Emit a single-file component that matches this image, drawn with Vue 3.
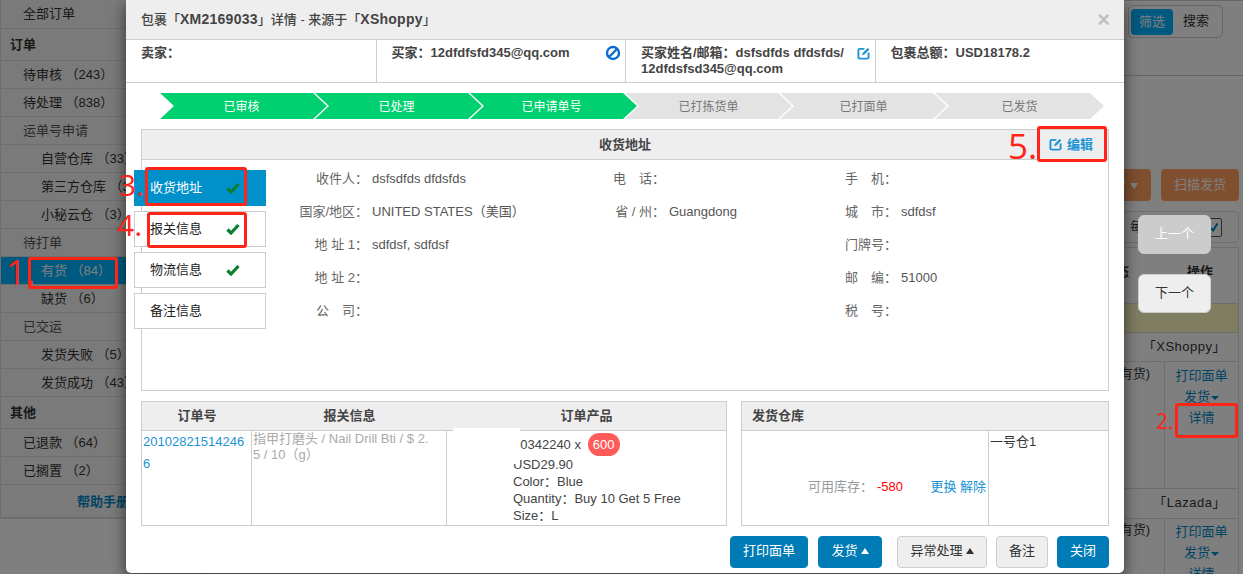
<script setup>
const sideRows = [
  { t: '全部订单', c: 'sub' },
  { t: '订单', c: 'group' },
  { t: '待审核 （243）', c: 'sub' },
  { t: '待处理 （838）', c: 'sub' },
  { t: '运单号申请', c: 'sub muted' },
  { t: '自营仓库 （33）', c: 'subsub' },
  { t: '第三方仓库 （3）', c: 'subsub' },
  { t: '小秘云仓 （3）', c: 'subsub' },
  { t: '待打单', c: 'sub muted' },
  { t: '有货 （84）', c: 'subsub active' },
  { t: '缺货 （6）', c: 'subsub' },
  { t: '已交运', c: 'sub muted' },
  { t: '发货失败 （5）', c: 'subsub' },
  { t: '发货成功 （43）', c: 'subsub' },
  { t: '其他', c: 'group' },
  { t: '已退款 （64）', c: 'sub' },
  { t: '已搁置 （2）', c: 'sub' }
]
const steps = [
  { t: '已审核', on: true }, { t: '已处理', on: true }, { t: '已申请单号', on: true },
  { t: '已打拣货单', on: false }, { t: '已打面单', on: false }, { t: '已发货', on: false }
]
const tabs = [
  { t: '收货地址', on: true, ok: true }, { t: '报关信息', ok: true },
  { t: '物流信息', ok: true }, { t: '备注信息', ok: false }
]
const fields = [
  ['收件人：', 'dsfsdfds dfdsfds'], ['电　话：', ''], ['手　机：', ''],
  ['国家/地区：', 'UNITED STATES（美国）'], ['省 / 州：', 'Guangdong'], ['城　市：', 'sdfdsf'],
  ['地 址 1：', 'sdfdsf, sdfdsf'], ['', ''], ['门牌号：', ''],
  ['地 址 2：', ''], ['', ''], ['邮　编：', '51000'],
  ['公　司：', ''], ['', ''], ['税　号：', '']
]
</script>

<template>
  <div class="page">
    <aside class="side">
      <div v-for="r in sideRows" :key="r.t" class="row" :class="r.c">{{ r.t }}</div>
      <div class="row help">帮助手册</div>
    </aside>
    <main class="main">
      <div class="filter-bar">
        <div class="seg"><span class="seg-on">筛选</span><span class="seg-off">搜索</span></div>
      </div>
      <div class="actions">
        <span class="orange first">批量发货<i class="caret light"></i></span>
        <span class="orange scan">扫描发货</span>
      </div>
      <div class="pager">
        <span>每</span>
        <span class="cb"><svg viewBox="0 0 14 14" width="12" height="12"><path d="M3 8l3 3 5-8" fill="none" stroke="#0089c9" stroke-width="2.4"/></svg></span>
      </div>
      <div class="table">
        <div class="t-head"><span class="t-st">状态</span><span>操作</span></div>
        <div class="t-yellow"></div>
        <div class="t-shop">「XShoppy」</div>
        <div class="t-row">
          <div class="t-left">有货)</div>
          <div class="t-ops"><a>打印面单</a><a>发货<i class="caret"></i></a><a>详情</a></div>
        </div>
        <div class="t-shop lazada">「Lazada」</div>
        <div class="t-row">
          <div class="t-left">有货)</div>
          <div class="t-ops"><a>打印面单</a><a>发货<i class="caret"></i></a><a>详情</a></div>
        </div>
      </div>
    </main>

    <div class="backdrop"></div>

    <section class="modal">
      <header class="m-head">
        <div class="m-title">包裹「<b>XM2169033</b>」详情 - 来源于「<b>XShoppy</b>」</div>
        <span class="m-close">×</span>
      </header>
      <div class="info">
        <div class="info-cell">卖家：</div>
        <div class="info-cell with-icon">
          <span>买家：12dfdfsfd345@qq.com</span>
          <svg class="ban" viewBox="0 0 16 16" width="16" height="16"><circle cx="8" cy="8" r="6" fill="none" stroke="#0a6ccf" stroke-width="2.4"/><path d="M4 12L12 4" stroke="#0a6ccf" stroke-width="2.4"/></svg>
        </div>
        <div class="info-cell with-icon">
          <span>买家姓名/邮箱：dsfsdfds dfdsfds/ 12dfdsfsd345@qq.com</span>
          <svg class="edit-in" viewBox="0 0 14 14" width="13" height="13"><path d="M8 2H3a1.500 1.500 0 0 0-1.500 1.500v7.500A1.500 1.500 0 0 0 3 12.500h8a1.500 1.500 0 0 0 1.500-1.500V6" fill="none" stroke="#1a94d4" stroke-width="2"/><path d="M5.500 8.800l.6-2.400L11.500 1l1.800 1.800L8 8.200z" fill="#1a94d4"/></svg>
        </div>
        <div class="info-cell">包裹总额：USD18178.2</div>
      </div>

      <div class="steps">
        <div v-for="s in steps" :key="s.t" class="step" :class="{ done: s.on }">{{ s.t }}</div>
      </div>

      <div class="panel">
        <div class="panel-head">
          <span>收货地址</span>
          <a class="edit">
            <svg viewBox="0 0 14 14" width="13" height="13"><path d="M8 2H3a1.500 1.500 0 0 0-1.500 1.500v7.500A1.500 1.500 0 0 0 3 12.500h8a1.500 1.500 0 0 0 1.500-1.500V6" fill="none" stroke="#1a94d4" stroke-width="2"/><path d="M5.500 8.800l.6-2.400L11.500 1l1.800 1.800L8 8.200z" fill="#1a94d4"/></svg>
            编辑
          </a>
        </div>
        <div class="panel-body">
          <div class="tabs">
            <div v-for="tab in tabs" :key="tab.t" class="tab" :class="{ on: tab.on }">
              <span>{{ tab.t }}</span>
              <svg v-if="tab.ok" viewBox="0 0 14 12" width="14" height="12"><path d="M1.500 6.500l3.500 3.500L12.500 2" fill="none" stroke="#0a7f2e" stroke-width="3.200"/></svg>
            </div>
          </div>
          <div class="fields">
            <template v-for="(f, i) in fields" :key="i">
              <div class="f-label">{{ f[0] }}</div>
              <div class="f-value">{{ f[1] }}</div>
            </template>
          </div>
        </div>
      </div>

      <div class="lower">
        <div class="box order">
          <div class="box-head">
            <div class="c1">订单号</div><div class="c2">报关信息</div><div class="c3">订单产品</div>
          </div>
          <div class="box-body">
            <div class="c1 order-no">20102821514246 6</div>
            <div class="c2 customs">指甲打磨头 / Nail Drill Bti / $ 2.5 / 10（g）</div>
            <div class="c3 product">
              <div class="pic-cover"></div>
              <div class="p-first">20342240 x <span class="badge">600</span></div>
              <div>USD29.90</div>
              <div>Color：Blue</div>
              <div>Quantity：Buy 10 Get 5 Free</div>
              <div>Size：L</div>
            </div>
          </div>
        </div>
        <div class="box ware">
          <div class="box-head ware-head">发货仓库</div>
          <div class="box-body">
            <div class="w1">
              <span class="stock">可用库存：</span><span class="minus">-580</span>
              <span class="links">更换 解除</span>
            </div>
            <div class="w2">一号仓1</div>
          </div>
        </div>
      </div>

      <footer class="m-foot">
        <button class="btn primary">打印面单</button>
        <button class="btn primary ship">发货<i class="up"></i></button>
        <button class="btn plain ex">异常处理<i class="up dark"></i></button>
        <button class="btn plain note">备注</button>
        <button class="btn primary close">关闭</button>
      </footer>
    </section>

    <button class="nav prev">上一个</button>
    <button class="nav next">下一个</button>

    <div class="mark n1">1.</div><div class="box-mark b1"></div>
    <div class="mark n2">2.</div><div class="box-mark b2"></div>
    <div class="mark n3">3.</div><div class="box-mark b3"></div>
    <div class="mark n4">4.</div><div class="box-mark b4"></div>
    <div class="mark n5">5.</div><div class="box-mark b5"></div>
  </div>
</template>

<style>
html, body { margin: 0; height: 100%; overflow: hidden; }
</style>

<style scoped>
.page {
  position: relative;
  display: flex;
  width: 1243px;
  height: 574px;
  overflow: hidden;
  background: #fff;
  color: #333;
  font: 13px/1.4 "Liberation Sans", "Noto Sans CJK SC", sans-serif;
}
.side { width: 200px; flex: none; align-self: flex-start; border: 1px solid #ddd; border-top: 0; box-sizing: border-box; background: #f5f5f5; }
.row { height: 28px; line-height: 28px; box-sizing: border-box; border-bottom: 1px solid #ddd; white-space: nowrap; }
.row.sub { padding-left: 22px; }
.row.subsub { padding-left: 40px; }
.row.muted { color: #555; }
.row.group { height: 32px; line-height: 32px; padding-left: 9px; font-weight: bold; }
.row.active { background: #00b2ff; color: #fff; }
.row.help { height: 33px; line-height: 33px; padding-left: 76px; color: #0089c9; font-weight: bold; }
.row:first-child { height: 29px; }

.main { flex: 1; display: flex; flex-direction: column; align-items: flex-end; padding-right: 4px; min-width: 0; }
.main > * { flex: none; }
.filter-bar { height: 76px; box-sizing: border-box; border-top: 1px solid #ccc; border-bottom: 1px solid #ccc; margin-right: -4px; width: calc(100% + 4px); padding: 4px 20px 0 0; display: flex; justify-content: flex-end; }
.seg { display: flex; align-items: center; padding: 3px; border: 1px solid #ccc; border-radius: 5px; width: 95px; box-sizing: border-box; height: 33px; }
.seg-on { background: #00b2ff; color: #fff; border-radius: 4px; width: 42px; height: 26px; line-height: 26px; text-align: center; margin-left: -1px; }
.seg-off { width: 46px; text-align: center; }
.actions { display: flex; gap: 10px; margin-top: 93px; height: 32px; width: 100%; justify-content: flex-end; }
.orange { background: #ff9f5f; color: #fff; border-radius: 4px; line-height: 32px; text-align: center; }
.orange.first { width: 120px; text-align: right; padding-right: 13px; box-sizing: border-box; }
.orange.scan { width: 78px; }
.pager { width: 100%; height: 32px; box-sizing: border-box; margin-top: 10px; border: 1px solid #ddd; border-radius: 4px; display: flex; align-items: center; justify-content: flex-end; gap: 62px; padding: 0 16px 0 4px; }
.cb { width: 15px; height: 17px; border: 1px solid #555; border-radius: 2px; display: flex; align-items: center; justify-content: center; }
.table { width: 100%; margin-top: 4px; border: 1px solid #ddd; border-bottom: 0; box-sizing: border-box; }
.t-head { height: 55px; display: flex; justify-content: flex-end; padding: 15px 25px 0 0; box-sizing: border-box; font-weight: bold; }
.t-st { margin-right: 58px; }
.t-yellow { height: 29px; background: #fffdc0; border-top: 1px solid #ddd; box-sizing: border-box; }
.t-shop { height: 29px; line-height: 28px; border-top: 1px solid #ddd; text-align: right; padding-right: 12px; box-sizing: border-box; letter-spacing: .5px; }
.t-shop.lazada { height: 30px; }
.t-row { height: 127px; display: flex; border-top: 1px solid #ddd; box-sizing: border-box; }
.t-left { flex: 1; padding: 3px 14px 0 0; text-align: right; }
.t-ops { width: 74px; flex: none; border-left: 1px solid #ddd; box-sizing: border-box; display: flex; flex-direction: column; align-items: center; padding-top: 3px; color: #0089c9; line-height: 21px; }
.lazada + .t-row .t-ops, .lazada + .t-row .t-left { padding-top: 2px; }
.caret { display: inline-block; border: 4px solid transparent; border-top-color: #0089c9; border-bottom: 0; margin-left: 1px; vertical-align: middle; }
.caret.light { border-width: 6px 4px 0; border-top-color: #fff; margin-left: 4px; }

.backdrop { position: absolute; inset: 0; background: rgba(0, 0, 0, .5); }

.modal {
  position: absolute; left: 126px; top: 0; width: 998px; height: 573px;
  background: #fff; border-radius: 0 0 5px 5px;
  box-shadow: 0 5px 15px rgba(0, 0, 0, .6);
  display: flex; flex-direction: column;
}
.m-head { height: 40px; flex: none; box-sizing: border-box; background: #eee; border-bottom: 1px solid #ccc; display: flex; justify-content: space-between; align-items: center; padding: 0 15px; }
.m-title { font-size: 13px; color: #444; font-weight: 500; }
.m-title b { font-size: 14px; letter-spacing: .25px; }
.m-close { font-size: 22px; font-weight: bold; color: #c0c0c0; line-height: 1; margin-right: -1px; }
.info { height: 43px; flex: none; box-sizing: border-box; display: grid; grid-template-columns: repeat(4, 1fr); border-bottom: 1px solid #ccc; font-weight: bold; font-size: 13px; color: #444; line-height: 16px; }
.info-cell { padding: 5px 15px 0; border-left: 1px solid #ccc; position: relative; box-sizing: border-box; }
.info-cell:first-child { border-left: 0; }
.with-icon { padding-right: 28px; }
.ban { position: absolute; right: 4px; top: 5px; }
.edit-in { position: absolute; right: 5px; top: 7px; }

.steps { display: flex; margin: 10px 0 0 34px; height: 26px; flex: none; }
.step {
  width: 167px; flex: none; margin-right: -12px; line-height: 28px; text-align: center;
  font-size: 12px; background: #e3e3e3; color: #777; box-sizing: border-box;
  clip-path: polygon(0 0, calc(100% - 14px) 0, 100% 50%, calc(100% - 14px) 100%, 0 100%, 14px 50%);
}
.step:last-child { width: 169px; }
.step.done { background: #00d06f; color: #fff; padding-right: 4px; }

.panel { margin: 10px 15px 0; height: 262px; flex: none; box-sizing: border-box; border: 1px solid #ccc; }
.panel-head { height: 30px; box-sizing: border-box; background: #eee; border-bottom: 1px solid #ccc; text-align: center; line-height: 29px; font-weight: bold; color: #444; position: relative; }
.edit { position: absolute; right: 15px; top: 0; color: #1a94d4; display: flex; align-items: center; gap: 5px; }
.panel-body { display: flex; }
.tabs { margin: 10px 0 0 -8px; display: flex; flex-direction: column; gap: 5px; width: 132px; flex: none; }
.tab { height: 36px; box-sizing: border-box; border: 1px solid #ccc; background: #fff; display: flex; align-items: center; justify-content: space-between; padding: 0 25px 0 15px; color: #222; }
.tab.on { background: #0090ca; border-color: #0090ca; color: #fff; }
.fields { display: grid; grid-template-columns: 102px 217px 80px 152px 80px 1fr; grid-auto-rows: 33px; margin-top: 3px; color: #555; align-items: center; flex: 1; }
.f-label { text-align: right; color: #666; white-space: nowrap; }
.f-value { padding-left: 4px; white-space: nowrap; }

.lower { display: flex; gap: 14px; margin: 10px 15px 0; height: 125px; flex: none; }
.box { border: 1px solid #ccc; box-sizing: border-box; display: flex; flex-direction: column; }
.order { width: 586px; }
.ware { flex: 1; }
.box-head { height: 29px; flex: none; box-sizing: border-box; background: #eee; border-bottom: 1px solid #ccc; display: flex; line-height: 27px; font-weight: bold; color: #444; text-align: center; }
.ware-head { padding-left: 10px; }
.box-body { flex: 1; display: flex; min-height: 0; }
.c1 { width: 110px; flex: none; box-sizing: border-box; }
.c2 { width: 195px; flex: none; box-sizing: border-box; }
.c3 { flex: 1; }
.order-no { padding: 0 0 0 1px; color: #1a94d4; line-height: 22px; word-break: break-all; border-right: 1px solid #ccc; }
.customs { padding: 0 14px 0 1px; color: #aaa; line-height: 16px; border-right: 1px solid #ccc; word-break: break-all; }
.product { position: relative; padding: 2px 0 0 66px; line-height: 17px; color: #444; white-space: nowrap; min-width: 0; }
.pic-cover { position: absolute; left: 6px; top: -3px; width: 67px; height: 36px; background: #fff; z-index: 1; }
.p-first { height: 23px; line-height: 23px; }
.badge { display: inline-block; width: 32px; height: 23px; line-height: 23px; border-radius: 12px; background: #ff5a5a; color: #fff; text-align: center; margin-left: 3px; vertical-align: top; }
.w1 { width: 247px; flex: none; box-sizing: border-box; border-right: 1px solid #ccc; position: relative; }
.stock { position: absolute; left: 66px; top: 47px; color: #999; }
.minus { position: absolute; left: 135px; top: 47px; color: #f00; }
.links { position: absolute; right: 2px; top: 47px; color: #1a94d4; }
.w2 { padding: 2px 0 0 1px; color: #333; }

.m-foot { display: flex; justify-content: flex-end; margin: 10px 15px 0 0; height: 32px; flex: none; }
.btn { height: 32px; box-sizing: border-box; border-radius: 4px; font: inherit; padding: 0 0 2px; border: 1px solid #007bb6; }
.primary { background: #007bb6; color: #fff; width: 78px; }
.plain { background: #eee; border-color: #ccc; color: #333; }
.ship { width: 64px; margin-left: 10px; }
.ex { width: 90px; margin-left: 15px; }
.note { width: 52px; margin-left: 9px; }
.close { width: 52px; margin-left: 9px; }
.up { display: inline-block; border: 4px solid transparent; border-bottom: 6px solid #fff; border-top: 0; margin-left: 3px; vertical-align: 1px; }
.up.dark { border-bottom-color: #333; }

.nav { position: absolute; left: 1138px; width: 73px; height: 39px; box-sizing: border-box; border-radius: 6px; border: 1px solid #ccc; font: inherit; padding: 0; }
.prev { top: 215px; background: #ccc; color: #fff; }
.next { top: 274px; background: #eee; color: #333; }

.box-mark { position: absolute; box-sizing: border-box; border: 3px solid #ff2418; border-radius: 3px; }
.b1 { left: 28px; top: 257px; width: 90px; height: 32px; }
.b2 { left: 1175px; top: 403px; width: 63px; height: 35px; }
.b3 { left: 145px; top: 167px; width: 102px; height: 39px; }
.b4 { left: 147px; top: 212px; width: 100px; height: 36px; }
.b5 { left: 1037px; top: 126px; width: 70px; height: 36px; }
.mark { position: absolute; color: #ff2418; font-family: "Open Sans", sans-serif; line-height: 1; white-space: nowrap; }
.n1 { left: 6px; top: 254px; font-size: 35px; }
.n2 { left: 1156px; top: 411px; font-size: 21px; }
.n3 { left: 119px; top: 170px; font-size: 30px; }
.n4 { left: 117px; top: 210px; font-size: 30px; }
.n5 { left: 1008px; top: 128px; font-size: 35px; }
</style>
